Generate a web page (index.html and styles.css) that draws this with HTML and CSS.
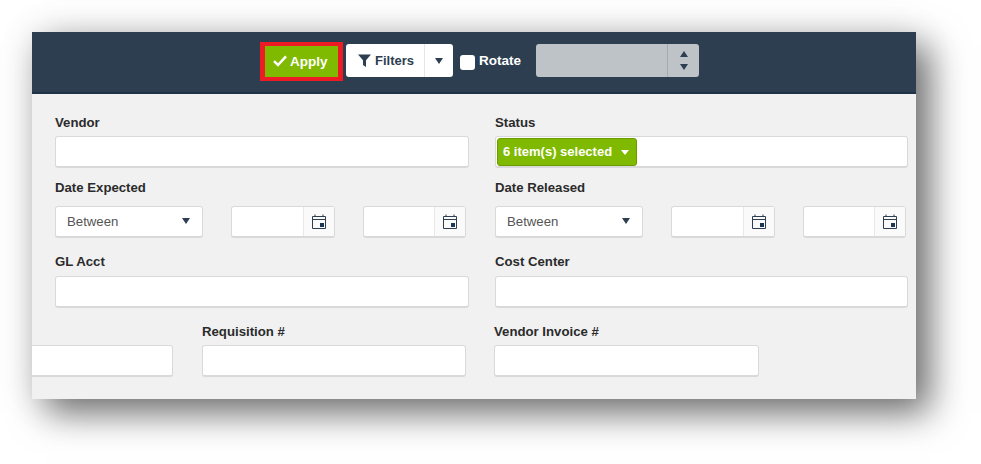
FILE: index.html
```html
<!DOCTYPE html>
<html lang="en">
<head>
  <meta charset="UTF-8">
  <title>Filters</title>
  <link rel="stylesheet" href="styles.css">
</head>

<body>
<div class="panel">
  <div class="toolbar">
    <div class="apply-mark">
      <button class="apply-btn">
        <svg class="check" width="14" height="12" viewBox="0 0 14 12"><path d="M1 6.2 5 10 13 1.4" fill="none" stroke="#fff" stroke-width="2.5"/></svg>
        Apply
      </button>
    </div>
    <div class="filters-btn">
      <span class="filters-main">
        <svg width="13" height="13" viewBox="0 0 13 13"><path d="M0 .5H13L8 6.3V13L5 11V6.3Z" fill="#2c3e50"/></svg>
        Filters
      </span>
      <span class="filters-caret"><i class="caret"></i></span>
    </div>
    <label class="rotate"><span class="check-box"></span>Rotate</label>
    <div class="spinner">
      <span class="spinner-value"></span>
      <span class="spinner-arrows"><i class="caret caret-up"></i><i class="caret"></i></span>
    </div>
  </div>

  <div class="form">
    <div class="row">
      <div class="field">
        <label>Vendor</label>
        <div class="input"></div>
      </div>
      <div class="field">
        <label>Status</label>
        <div class="input input-status">
          <span class="tag">6 item(s) selected <i class="caret caret-white"></i></span>
        </div>
      </div>
    </div>

    <div class="row row-dates">
      <div class="field">
        <label>Date Expected</label>
        <div class="date-line">
          <div class="select">Between <i class="caret"></i></div>
          <div class="date">
            <span class="date-addon">
              <svg width="14" height="15" viewBox="0 0 14 15"><path d="M.5 2.5H13.5V14.5H.5ZM.5 5.5H13.5" fill="none" stroke="#2c3e50"/><path d="M3 .5V3M11 .5V3" stroke="#2c3e50"/><rect x="8" y="9" width="4" height="4" fill="#1a3556"/></svg>
            </span>
          </div>
          <div class="date date-last">
            <span class="date-addon">
              <svg width="14" height="15" viewBox="0 0 14 15"><path d="M.5 2.5H13.5V14.5H.5ZM.5 5.5H13.5" fill="none" stroke="#2c3e50"/><path d="M3 .5V3M11 .5V3" stroke="#2c3e50"/><rect x="8" y="9" width="4" height="4" fill="#1a3556"/></svg>
            </span>
          </div>
        </div>
      </div>
      <div class="field">
        <label>Date Released</label>
        <div class="date-line">
          <div class="select">Between <i class="caret"></i></div>
          <div class="date">
            <span class="date-addon">
              <svg width="14" height="15" viewBox="0 0 14 15"><path d="M.5 2.5H13.5V14.5H.5ZM.5 5.5H13.5" fill="none" stroke="#2c3e50"/><path d="M3 .5V3M11 .5V3" stroke="#2c3e50"/><rect x="8" y="9" width="4" height="4" fill="#1a3556"/></svg>
            </span>
          </div>
          <div class="date date-last">
            <span class="date-addon">
              <svg width="14" height="15" viewBox="0 0 14 15"><path d="M.5 2.5H13.5V14.5H.5ZM.5 5.5H13.5" fill="none" stroke="#2c3e50"/><path d="M3 .5V3M11 .5V3" stroke="#2c3e50"/><rect x="8" y="9" width="4" height="4" fill="#1a3556"/></svg>
            </span>
          </div>
        </div>
      </div>
    </div>

    <div class="row row-gl">
      <div class="field">
        <label>GL Acct</label>
        <div class="input"></div>
      </div>
      <div class="field">
        <label>Cost Center</label>
        <div class="input"></div>
      </div>
    </div>

    <div class="row-last">
      <div class="field field-cut">
        <label>&nbsp;</label>
        <div class="input"></div>
      </div>
      <div class="field field-req">
        <label>Requisition #</label>
        <div class="input"></div>
      </div>
      <div class="field field-invoice">
        <label>Vendor Invoice #</label>
        <div class="input"></div>
      </div>
    </div>
  </div>
</div>
</body>
</html>
```

FILE: styles.css
```css
body {
  margin: 0;
  height: 464px;
  overflow: hidden;
  background: #fff;
  font-family: "Liberation Sans", Arial, sans-serif;
  font-size: 13px;
  color: #2b2b2b;
}
.panel {
  width: 884px;
  height: 367px;
  margin: 32px 0 0 32px;
  background: #f1f1f1;
  box-shadow: 14px 14px 34px rgba(0, 0, 0, 0.55), 0 0 36px rgba(0, 0, 0, 0.1);
  overflow: hidden;
}

/* toolbar */
.toolbar {
  display: flex;
  align-items: flex-start;
  height: 48px;
  padding: 12px 0 0 228px;
  background: #2c3e50;
  border-bottom: 2px solid #1f3348;
}
.apply-mark {
  width: 73px;
  height: 31px;
  margin-top: -2px;
  padding: 4px 5px;
  background: #ed1c24;
}
.apply-btn {
  display: flex;
  align-items: center;
  gap: 3px;
  width: 100%;
  height: 100%;
  padding: 0 0 1px 8px;
  border: 0;
  background: #7fba00;
  color: #fff;
  font: bold 13.5px "Liberation Sans", Arial, sans-serif;
}
.filters-btn {
  display: flex;
  width: 107px;
  height: 33px;
  margin-left: 3px;
  background: #fff;
  border-radius: 3px;
  color: #2c3e50;
  font-weight: bold;
}
.filters-main {
  display: flex;
  align-items: center;
  gap: 4px;
  width: 79px;
  padding-left: 12px;
  box-sizing: border-box;
  border-right: 1px solid #e6e6e6;
}
.filters-caret {
  flex: 1;
  display: flex;
  align-items: center;
  justify-content: center;
}
.caret {
  display: inline-block;
  width: 0;
  height: 0;
  border-left: 4px solid transparent;
  border-right: 4px solid transparent;
  border-top: 6px solid #2c3e50;
}
.caret-up {
  border-top: 0;
  border-bottom: 6px solid #2c3e50;
}
.caret-white {
  border-top: 5px solid #fff;
  margin-left: 5px;
  vertical-align: 1px;
}
.rotate {
  display: flex;
  align-items: center;
  height: 16px;
  margin: 8px 0 0 7px;
  color: #fff;
  font-weight: bold;
  font-size: 13.5px;
}
.check-box {
  width: 15px;
  height: 15px;
  margin: 4px 4px 0 0;
  background: #fff;
  border-radius: 3px;
}
.spinner {
  display: flex;
  width: 163px;
  height: 33px;
  margin-left: 15px;
  background: #bdc3c7;
  border-radius: 3px;
}
.spinner-value {
  width: 131px;
  border-right: 1px solid #a3abb0;
}
.spinner-arrows {
  flex: 1;
  display: flex;
  flex-direction: column;
  align-items: center;
  justify-content: center;
  gap: 7px;
}

/* form */
.form {
  padding: 21px 0 0 23px;
}
.row {
  display: grid;
  grid-template-columns: 414px 413px;
  column-gap: 26px;
}
.row-dates {
  margin-top: 12px;
}
.row-gl {
  margin-top: 16px;
}
.field label {
  display: block;
  height: 15px;
  line-height: 15px;
  margin-bottom: 6px;
  font-size: 13.2px;
  font-weight: bold;
}
.row-gl .field label {
  margin-bottom: 7px;
}
.input {
  height: 32px;
  box-sizing: border-box;
  background: #fff;
  border: 1px solid #d9d9d9;
  border-bottom-width: 2px;
  border-radius: 3px;
}
.input-status {
  padding: 1px;
}
.tag {
  display: inline-block;
  height: 28px;
  line-height: 26px;
  padding: 0 7px 0 5px;
  box-sizing: border-box;
  background: #7fba00;
  border: 1px solid #6a9c00;
  border-radius: 3px;
  color: #fff;
  font-weight: bold;
}
.date-line {
  display: flex;
  margin-top: 11px;
}
.select, .date {
  display: flex;
  height: 32px;
  box-sizing: border-box;
  background: #fff;
  border: 1px solid #d9d9d9;
  border-bottom-width: 2px;
  border-radius: 3px;
}
.select {
  width: 148px;
  align-items: center;
  justify-content: space-between;
  padding: 0 12px 1px 11px;
  color: #555;
  font-size: 13.2px;
}
.date {
  width: 104px;
  margin-left: 28px;
  justify-content: flex-end;
}
.date-last {
  width: 103px;
}
.date-addon {
  display: flex;
  align-items: center;
  justify-content: center;
  width: 30px;
  background: #fafafa;
  border-left: 1px solid #e8e8e8;
}
.row-last {
  display: flex;
  margin: 16px 0 0 -23px;
}
.field-cut {
  width: 141px;
}
.field-cut .input {
  border-left: 0;
  border-radius: 0 3px 3px 0;
}
.field-req {
  width: 264px;
  margin-left: 29px;
}
.field-invoice {
  width: 265px;
  margin-left: 28px;
}
```
